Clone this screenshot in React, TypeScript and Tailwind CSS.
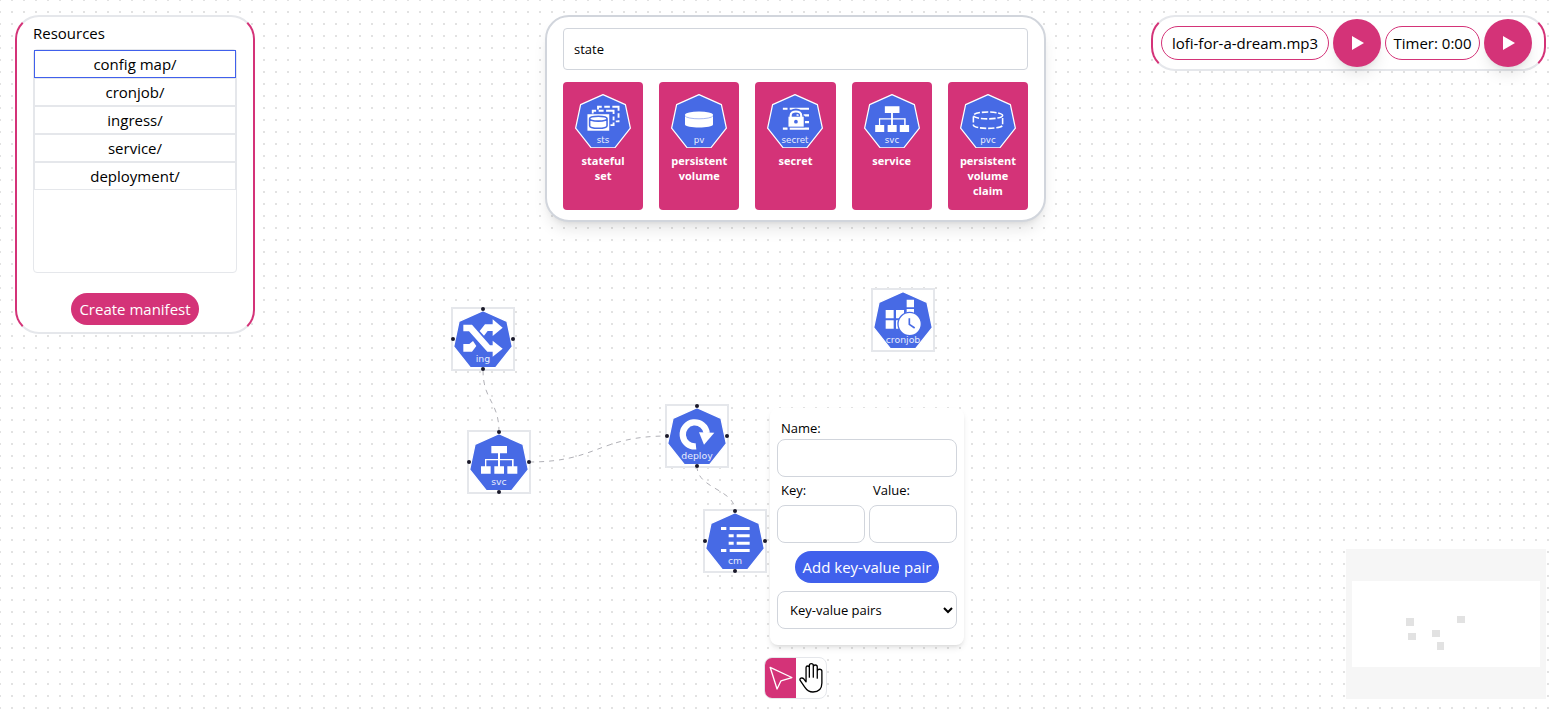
import type { ReactNode } from "react";

type Kind = "sts" | "pv" | "secret" | "svc" | "pvc" | "ing" | "deploy" | "cm" | "cronjob";

const BLUE = "#476ae5";

const glyphs: Record<Kind, ReactNode> = {
  sts: (
    <>
      <g fill="none" stroke="#fff" strokeWidth="6">
        <path d="M74 50V41H86M94 41H112M120 41H140V54M140 62V76M140 84V88H131" />
        <path d="M57 63V54H68M76 54H92M100 54H124V64M124 72V84M124 92V100H114" />
      </g>
      <rect x="40" y="65" width="70" height="53" fill="#fff" />
      <g fill="none" stroke={BLUE} strokeWidth="5">
        <path d="M47 79V102C47 113 103 113 103 102V79C103 69 47 69 47 79C47 90 103 90 103 79" />
      </g>
    </>
  ),
  pv: (
    <>
      <path d="M45 67V98C45 111 135 111 135 98V67Z" fill="#fff" />
      <ellipse cx="90" cy="67" rx="45" ry="11" fill="#fff" />
      <path d="M45 70C50 83 130 83 135 70" fill="none" stroke="#9fb1f2" strokeWidth="3" />
    </>
  ),
  secret: (
    <>
      <g fill="#fff">
        <path d="M51 44h15v7H51zM73 44h62v7H73zM51 108h15v7H51zM73 108h62v7H73zM95 65h40v7H95zM95 87h40v7H95z" />
      </g>
      <path d="M65 70H122V107H65z" fill={BLUE} />
      <path d="M76 76V69C76 50 110 50 110 69V76" fill="none" stroke={BLUE} strokeWidth="16" />
      <path d="M76 76V69C76 52 110 52 110 69V76" fill="none" stroke="#fff" strokeWidth="7" />
      <rect x="69" y="73" width="49" height="32" fill="#fff" />
      <circle cx="93" cy="89" r="6" fill={BLUE} />
    </>
  ),
  svc: (
    <path
      fill="#fff"
      d="M67 39H114V61H93V78H134V100H145V122H115V100H129V82H93V100H105V122H76V100H87V82H52V100H65V122H36V100H48V78H87V61H67Z"
    />
  ),
  pvc: (
    <g fill="none" stroke="#fff" strokeWidth="5">
      <ellipse cx="90" cy="69" rx="47" ry="11" strokeDasharray="20 6" />
      <path d="M43 72V100C45 114 135 114 137 100V72" strokeDasharray="20 6" />
    </g>
  ),
  ing: (
    <g fill="#fff" transform="translate(-39 -90)">
      <path d="M70 134H96L150 196H158V182L188 206L158 230V215H142L87 154H70Z" />
      <path d="M119 153L135 133H158V118L188 143L158 168V153H143L132 167Z" />
      <path d="M70 215V192H88L99 183L109 198L96 215Z" />
    </g>
  ),
  deploy: (
    <>
      <path d="M87 118A36 36 0 1 1 119 78" fill="none" stroke="#fff" strokeWidth="19" />
      <path d="M96 76L142 77L111 113Z" fill="#fff" />
    </>
  ),
  cm: (
    <path
      fill="#fff"
      d="M48 45h16v9H48zM74 45h60v9H74zM71 67h15v9H71zM95 67h39v9H95zM71 89h15v9H71zM95 89h39v9H95zM48 111h16v9H48zM74 111h60v9H74z"
    />
  ),
  cronjob: (
    <>
      <path fill="#fff" d="M101 26h22v23h-22zM101 54h22v12h-22zM38 57h24v25H38zM69 57h24v25H69zM38 88h24v25H38zM69 88h24v25H69z" />
      <circle cx="110" cy="99" r="35" fill="#fff" stroke={BLUE} strokeWidth="4" />
      <path d="M109 82V100L125 111" fill="none" stroke={BLUE} strokeWidth="5" />
    </>
  ),
};

function KubeIcon({ kind, className }: { kind: Kind; className: string }) {
  return (
    <svg viewBox="0 0 180 175" className={className} aria-hidden="true">
      <path
        d="M90 2L162 34L178 110L128 173H52L2 110L18 34Z"
        fill={BLUE}
        stroke="#fff"
        strokeWidth="4"
        strokeLinejoin="round"
      />
      {glyphs[kind]}
      <text
        x="90"
        y="156"
        textAnchor="middle"
        fontSize="28"
        fontWeight="400"
        fill="#e8edfd"
        fontFamily="DejaVu Sans, sans-serif"
      >
        {kind}
      </text>
    </svg>
  );
}

const handles = [
  "left-[28px] -top-[2px]",
  "left-[28px] -bottom-[2px]",
  "-left-[2px] top-[28px]",
  "-right-[2px] top-[28px]",
];

function FlowNode({ kind, place, linked = true }: { kind: Kind; place: string; linked?: boolean }) {
  return (
    <div className={`absolute flex size-16 items-center justify-center border-2 border-gray-200 bg-white ${place}`}>
      <KubeIcon kind={kind} className="w-full" />
      {linked &&
        handles.map((h) => <span key={h} className={`absolute size-1 rounded-full bg-[#1a192b] ${h}`} />)}
    </div>
  );
}

const field = "h-[38px] w-full min-w-0 rounded-lg border border-gray-300 bg-white px-3 text-[13px]";

function ConfigMapForm() {
  return (
    <form className="absolute left-[770px] top-[408px] flex w-[194px] flex-col rounded-lg bg-white px-[7px] pb-4 pt-[10px] text-[13px] shadow-md">
      <label htmlFor="cm-name" className="mb-px pl-1 leading-5">
        Name:
      </label>
      <input id="cm-name" className={field} />
      <div className="grid grid-cols-2 gap-1">
        <div>
          <label htmlFor="cm-key" className="flex h-7 items-center pl-1">
            Key:
          </label>
          <input id="cm-key" className={field} />
        </div>
        <div>
          <label htmlFor="cm-value" className="flex h-7 items-center pl-1">
            Value:
          </label>
          <input id="cm-value" className={field} />
        </div>
      </div>
      <button type="button" className="mt-2 h-8 self-center rounded-full bg-[#4060ec] px-2 text-[15px] text-white">
        Add key-value pair
      </button>
      <select
        aria-label="Key-value pairs"
        className="mt-2 h-[38px] w-full rounded-lg border border-gray-300 bg-white pl-2 text-[13px]"
      >
        <option>Key-value pairs</option>
      </select>
    </form>
  );
}

const resources = ["config map/", "cronjob/", "ingress/", "service/", "deployment/"];

const results: { kind: Kind; label: string }[] = [
  { kind: "sts", label: "stateful set" },
  { kind: "pv", label: "persistent volume" },
  { kind: "secret", label: "secret" },
  { kind: "svc", label: "service" },
  { kind: "pvc", label: "persistent volume claim" },
];

const panel = "rounded-3xl border-2 border-x-[#d43378] border-y-gray-200 bg-white";

function PlayButton({ label }: { label: string }) {
  return (
    <button
      type="button"
      aria-label={label}
      className="flex size-12 shrink-0 items-center justify-center rounded-full bg-[#d43378] shadow-lg"
    >
      <svg viewBox="0 0 12 14" className="ml-[2px] h-[14px] w-3">
        <path d="M0 0L12 7L0 14Z" fill="#fff" />
      </svg>
    </button>
  );
}

export default function App() {
  return (
    <main className="relative flex min-h-screen flex-col justify-between overflow-hidden bg-white bg-[conic-gradient(from_270deg_at_2px_2px,#e2e2e2_90deg,transparent_0)] bg-[length:12px_12px] bg-[position:11px_11px] font-['Open_Sans','Noto_Sans',sans-serif] text-[15px] text-black">
      <div className="absolute inset-0">
        <svg className="absolute inset-0 size-full" aria-hidden="true">
          <g fill="none" stroke="#b1b1b7" strokeDasharray="5">
            <path d="M483 370C483 401 499 401 499 432" />
            <path d="M529 462C598 462 598 436 668 436" />
            <path d="M697 466C697 489 735 489 735 511" />
          </g>
        </svg>
        <FlowNode kind="ing" place="left-[451px] top-[307px]" />
        <FlowNode kind="svc" place="left-[467px] top-[430px]" />
        <FlowNode kind="deploy" place="left-[665px] top-[404px]" />
        <FlowNode kind="cronjob" place="left-[871px] top-[288px]" linked={false} />
        <FlowNode kind="cm" place="left-[703px] top-[509px]" />
        <ConfigMapForm />
      </div>

      <header className="grid grid-cols-[53fr_501px_50fr] items-start pl-[15px] pr-3 pt-[15px]">
        <aside className={`relative flex w-60 flex-col px-4 pb-[7px] pt-1 ${panel}`}>
          <h2 className="mb-1 leading-6">Resources</h2>
          <ul className="h-56 rounded border border-gray-200">
            {resources.map((name, i) => (
              <li key={name}>
                <button
                  type="button"
                  className={`h-7 w-full border ${i === 0 ? "border-[#4060ec]" : "border-gray-200"}`}
                >
                  {name}
                </button>
              </li>
            ))}
          </ul>
          <button type="button" className="mt-5 h-8 self-center rounded-full bg-[#d43378] px-2 text-white">
            Create manifest
          </button>
        </aside>

        <section className="relative rounded-3xl border-2 border-gray-300 bg-white px-4 pb-[10px] pt-[11px] shadow-lg">
          <input
            aria-label="Search resources"
            defaultValue="state"
            className="h-[42px] w-full rounded border border-gray-300 px-[10px] text-[13px]"
          />
          <div className="mt-3 grid grid-cols-5 gap-4">
            {results.map(({ kind, label }) => (
              <button
                key={kind}
                type="button"
                className="flex h-32 flex-col items-center rounded bg-[#d43378] px-3 pt-3 text-[11px] font-bold leading-[15px] text-white"
              >
                <KubeIcon kind={kind} className="mb-[5px] w-14 shrink-0" />
                {label}
              </button>
            ))}
          </div>
        </section>

        <div className={`relative flex items-center gap-1 justify-self-end py-[2px] pl-2 pr-3 ${panel}`}>
          <span className="flex h-[34px] w-[168px] items-center justify-center whitespace-nowrap rounded-full border border-[#d43378]">
            lofi-for-a-dream.mp3
          </span>
          <PlayButton label="Play music" />
          <span className="flex h-[34px] w-[95px] items-center justify-center whitespace-nowrap rounded-full border border-[#d43378]">
            Timer: 0:00
          </span>
          <PlayButton label="Start timer" />
        </div>
      </header>

      <footer className="relative grid grid-cols-[53fr_501px_50fr] items-end pb-[13px] pl-[15px] pr-3">
        <div className="col-start-2 flex h-[42px] overflow-hidden justify-self-center rounded-lg border border-gray-200 bg-white">
          <button type="button" aria-label="Select" className="flex w-[31px] items-center justify-center bg-[#d43378]">
            <svg viewBox="26 815 72 73" className="size-6" fill="none" stroke="#fff" strokeWidth="4" strokeLinejoin="round">
              <path d="M29 819L95 850L62 860L50 885Z" />
            </svg>
          </button>
          <button type="button" aria-label="Pan" className="flex w-[30px] items-center justify-center">
            <svg viewBox="117 803 72 91" className="h-[30px] w-6" fill="none" stroke="#000" strokeWidth="4" strokeLinecap="round" strokeLinejoin="round">
              <path d="M138 860V817a5 5 0 0 1 10 0V846M148 846V811a6 6 0 0 1 12 0V846M160 846V815a6 6 0 0 1 12 0V849M172 849V828a7 6 0 0 1 14 0V864C186 883 174 891 159 891C146 891 140 885 134 876L120 856C117 849 126 846 131 851L138 860" />
            </svg>
          </button>
        </div>
        <svg viewBox="0 0 200 150" className="h-[150px] w-[200px] justify-self-end" role="img" aria-label="Minimap">
          <rect width="200" height="150" fill="#f6f6f6" />
          <rect x="6" y="32" width="188" height="86" fill="#fff" />
          <g fill="#e2e2e2">
            <rect x="60" y="69" width="8" height="8" />
            <rect x="111" y="67" width="8" height="7" />
            <rect x="62" y="84" width="8" height="7" />
            <rect x="86" y="81" width="8" height="7" />
            <rect x="91" y="93" width="7" height="8" />
          </g>
        </svg>
      </footer>
    </main>
  );
}
